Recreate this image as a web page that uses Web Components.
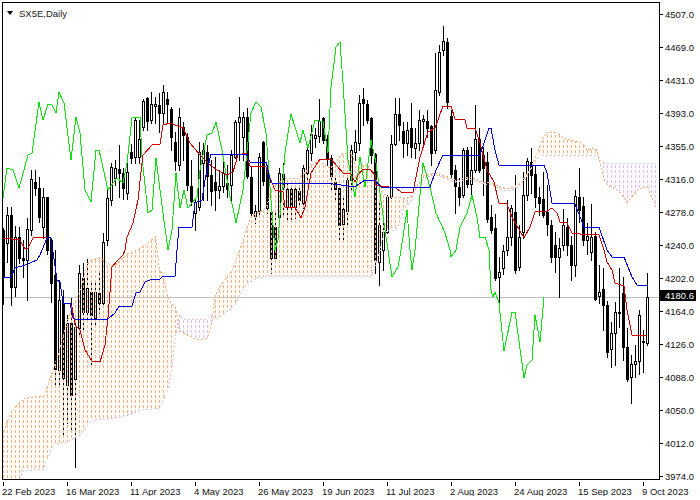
<!DOCTYPE html>
<html>
<head>
<meta charset="utf-8">
<title>SX5E,Daily</title>
<style>
    html, body { margin: 0; background: #fff; }
    body { padding: 2px; width: 696px; height: 496px; overflow: hidden; box-sizing: border-box; }
</style>
</head>
<body>
<chart-window symbol="SX5E,Daily" bid="4180.6" bid-y="297"></chart-window>

<script>
// chart data is in screen pixels, read off the picture: [high, bodyTop, bodyBottom, low, up]
const CANDLES = [
    [228,230,277,304,0],[207,215,243,262,1],[207,215,287,305,0],[226,237,287,296,1],[227,237,258,263,0],[240,258,260,277,0],
    [218,229,260,300,1],[170,179,230,235,1],[170,182,188,195,0],[177,188,217,222,0],[188,197,227,238,1],[197,197,250,254,0],
    [238,240,283,302,0],[250,275,369,387,0],[280,300,370,385,1],[290,303,378,435,0],[315,323,385,423,1],[298,323,395,432,0],
    [320,327,379,467,1],[265,273,328,335,1],[263,278,312,330,0],[259,288,312,322,1],[280,292,315,367,0],[280,292,318,325,1],
    [270,293,303,313,0],[233,242,303,304,1],[190,198,240,245,1],[163,167,200,205,1],[160,168,178,185,1],[145,169,173,197,0],
    [168,173,188,199,0],[162,172,193,199,1],[144,152,158,163,0],[118,120,157,163,1],[120,139,157,163,1],[99,101,127,130,1],
    [97,98,121,130,0],[92,104,120,123,1],[97,104,106,123,1],[93,105,113,132,0],[85,92,113,123,1],[92,99,104,123,0],
    [107,109,137,150,0],[132,142,161,170,0],[108,117,165,170,1],[122,127,135,160,0],[133,137,185,190,0],[160,186,201,205,0],
    [200,202,213,230,1],[142,152,207,210,1],[143,150,163,200,1],[145,152,176,200,0],[160,175,191,205,0],[157,182,190,210,0],
    [170,186,190,198,1],[160,173,186,192,1],[165,183,189,197,0],[150,155,185,200,1],[120,122,157,158,1],[97,117,122,160,1],
    [112,117,137,160,1],[108,117,176,178,0],[167,177,213,217,0],[205,211,216,223,1],[153,157,211,215,1],[141,142,181,185,0],
    [165,168,208,213,0],[200,212,258,273,0],[210,227,258,258,0],[168,173,217,225,1],[163,174,187,217,0],[180,189,207,220,1],
    [185,189,206,220,0],[185,189,207,218,1],[185,191,200,205,0],[165,168,203,208,1],[145,150,173,180,1],[125,134,153,160,1],
    [128,135,138,147,1],[99,121,136,142,1],[117,118,140,143,0],[135,139,158,165,0],[155,158,176,189,0],[178,182,189,200,0],
    [185,188,225,240,0],[197,209,224,240,1],[175,180,211,224,1],[145,150,180,190,1],[130,142,152,160,1],[95,103,143,150,1],
    [88,99,103,125,0],[100,104,120,123,0],[117,118,155,163,0],[153,154,260,273,0],[200,225,262,285,1],[220,232,250,270,1],
    [195,197,232,233,1],[135,144,197,198,1],[98,114,144,145,1],[98,114,125,140,0],[122,131,143,157,0],[122,130,143,155,1],
    [103,128,147,157,0],[128,143,148,158,1],[110,120,143,150,1],[115,119,121,145,1],[110,121,128,137,0],[125,126,153,165,0],
    [53,90,150,153,1],[45,52,92,95,1],[26,41,50,55,1],[38,42,102,108,0],[110,116,174,178,0],[165,170,186,213,0],
    [178,187,197,205,0],[148,150,195,197,1],[147,150,184,187,0],[147,170,184,195,1],[105,139,170,172,1],[128,139,170,172,0],
    [147,155,168,195,0],[152,162,219,222,0],[205,217,230,233,0],[214,228,278,280,0],[257,272,277,303,1],[245,251,268,274,1],
    [200,237,250,255,1],[205,208,237,245,1],[175,212,270,273,0],[225,237,267,270,1],[172,195,232,238,1],[158,161,195,200,1],
    [148,162,175,193,0],[165,174,197,207,0],[187,197,203,215,0],[172,199,215,217,0],[185,212,224,235,0],[220,225,257,262,0],
    [232,245,257,272,0],[238,248,257,297,1],[209,225,245,250,1],[218,227,245,255,0],[236,245,265,280,0],[190,196,265,276,1],
    [168,197,210,222,0],[197,206,240,245,0],[223,236,240,254,1],[204,237,252,260,1],[232,236,299,300,0],[265,292,296,303,1],
    [268,289,305,330,0],[301,305,352,357,0],[322,333,349,367,1],[302,312,333,365,1],[268,312,313,327,0],[277,293,347,360,0],
    [328,347,379,381,0],[355,364,377,403,1],[345,361,364,377,1],[310,315,361,374,1],[330,341,342,372,0],[273,297,343,345,1]
]

const TENKAN = [3,238,20,240,25,249,28,248,33,238,40,237,50,237,53,252,57,280,60,282,63,303,70,303,72,307,75,325,80,330,85,350,92,361,100,362,105,345,108,317,112,267,118,260,123,255,125,250,127,237,133,223,138,200,142,163,143,155,152,145,160,144,163,125,170,123,183,128,190,143,200,155,208,163,217,170,227,175,233,172,238,155,246,153,250,166,266,167,270,178,275,190,283,192,285,207,295,207,301,218,305,207,311,173,320,159,331,159,343,173,351,174,355,182,358,175,363,169,370,169,375,175,376,185,381,186,396,188,401,192,413,192,420,157,428,132,435,128,443,106,451,106,455,119,465,120,467,128,475,128,480,143,487,170,494,182,499,203,507,204,512,217,524,238,530,227,535,212,547,211,552,208,557,213,560,222,567,223,572,233,580,234,599,235,604,250,607,262,612,270,615,283,624,286,627,310,632,335,647,336]

const KIJUN = [3,277,11,277,15,268,25,265,37,260,40,255,47,238,50,237,53,252,57,280,60,282,63,303,70,303,73,318,77,320,108,319,115,313,119,306,132,306,136,293,140,292,145,282,152,279,160,279,163,276,175,276,177,250,179,227,192,227,195,203,202,200,205,180,208,167,211,154,246,154,250,162,266,162,271,183,333,184,348,186,356,186,365,180,375,180,381,187,430,187,436,170,443,155,480,155,485,140,489,128,491,128,495,150,499,165,544,165,547,173,552,203,575,204,584,227,599,227,607,250,612,257,624,257,632,277,637,285,647,285]

const CHIKOU = [3,198,7,168,13,170,19,188,28,155,32,153,39,102,43,120,48,104,52,105,56,113,59,92,64,103,71,160,76,117,80,133,85,190,91,202,96,150,99,150,108,190,117,178,123,183,127,163,132,118,140,117,142,157,148,213,152,210,156,158,163,213,168,250,172,230,176,173,180,208,184,190,188,208,197,197,200,170,207,135,212,133,216,122,222,150,230,197,233,208,236,223,243,190,251,113,256,102,261,107,266,133,271,200,275,250,278,240,285,153,291,114,300,143,303,130,308,148,315,120,323,122,328,153,331,87,336,47,340,42,343,83,348,160,355,197,360,157,365,187,371,140,376,163,380,193,385,230,388,250,392,277,398,267,401,250,407,210,410,250,412,270,415,250,423,163,430,187,436,213,445,233,450,250,451,257,456,250,460,227,467,213,472,195,477,217,480,238,485,237,489,250,491,290,493,297,495,292,499,303,504,351,512,312,515,312,524,378,527,365,532,360,535,315,540,342,544,297]

const CLOUD_TOP = [3,432,10,413,23,398,43,396,50,378,55,363,62,340,70,310,80,290,88,260,100,258,113,267,125,255,137,250,147,243,155,237,157,250,158,267,165,283,168,302,177,308,180,318,185,319,210,319,213,300,217,290,233,268,240,248,250,217,266,208,270,190,283,178,300,178,310,166,320,160,326,168,333,167,341,153,351,153,356,170,366,163,376,180,382,193,390,197,400,197,405,200,413,193,420,180,425,174,437,173,453,180,467,177,480,181,490,183,500,187,510,189,520,183,530,170,539,147,545,132,557,132,560,137,580,142,587,150,595,148,600,163,655,163]

const CLOUD_BOTTOM = [3,479,20,479,23,470,45,469,48,453,55,443,67,442,82,433,90,420,113,418,133,413,137,410,160,408,167,390,172,368,173,340,178,330,187,335,197,340,207,338,212,322,225,312,233,308,240,293,247,283,260,277,271,276,371,276,376,262,380,250,384,230,397,230,403,210,410,202,415,190,425,176,437,175,453,182,467,179,480,183,490,185,500,189,510,191,520,185,530,170,539,155,597,155,599,160,604,183,617,190,627,202,639,188,647,187,655,207]

function at(points, x) {
    for (let i = 2; i < points.length; i += 2) {
        if (x <= points[i]) {
            const x0 = points[i - 2], y0 = points[i - 1]
            return y0 + (points[i + 1] - y0) * (x - x0) / (points[i] - x0)
        }
    }
    return points[points.length - 1]
}

function toPoints(flat) {
    let out = []
    for (let i = 0; i < flat.length; i += 2) out.push(flat[i] + ',' + flat[i + 1])
    return out.join(' ')
}

// the thistle part of the cloud is where span B runs above span A
function isThistle(x) {
    return (x > 178 && x < 212) || x > 597
}

class ChartPlot extends HTMLElement {
    constructor() {
        super()
        this.attachShadow({ mode: 'open' })
    }

    connectedCallback() {
        this.render()
    }

    candles() {
        return CANDLES.map((c, i) => {
            const x = 3 + 4 * i + 0.5
            const [high, top, bottom, low, up] = c
            return `<path d="M${x} ${high}V${low + 1}"/><rect x="${x - 1}" y="${top + 0.5}" width="2" height="${Math.max(bottom - top, 1)}" fill="${up ? '#fff' : '#000'}"/>`
        }).join('')
    }

    cloud() {
        let hatch = ''
        let wash = ''
        let spanA = []
        let spanB = []
        for (let i = 0; i < 164; i++) {
            const x = 3 + 4 * i
            if (x > 655) break
            const top = Math.round(at(CLOUD_TOP, x))
            const bottom = Math.round(at(CLOUD_BOTTOM, x))
            const thistle = isThistle(x)
            spanA.push(x + 0.5, thistle ? bottom : top)
            spanB.push(x + 0.5, thistle ? top : bottom)
            if (bottom - top > 1) {
                const start = top - (top % 5)
                hatch += `<path d="M${x + 0.5} ${start}V${bottom}" stroke="${thistle ? '#dfc0ec' : '#f4b288'}" clip-path="inset(${top - start}px 0 0 0)"/>`
                wash += `<rect x="${x - 1}" y="${top}" width="4" height="${bottom - top}" fill="${thistle ? '#fdfafe' : '#fffbf7'}"/>`
            }
        }
        return {
            wash: wash,
            lines: `<g stroke-dasharray="3 2" fill="none" shape-rendering="crispEdges">${hatch}
            <polyline points="${toPoints(spanA)}" stroke="#f4b080" stroke-dasharray="2 2"/>
            <polyline points="${toPoints(spanB)}" stroke="#dcc8dc" stroke-dasharray="2 2"/></g>`
        }
    }

    render() {
        const cloud = this.cloud()
        this.shadowRoot.innerHTML = `
      <style>
        :host {
          display: block;
          position: relative;
          width: 656px;
          height: 476px;
          border: 1px solid #000;
          background: #fff;
        }

        svg {
          display: block;
        }

        .legend {
          position: absolute;
          left: 4px;
          top: 4px;
          display: flex;
          align-items: center;
          gap: 6px;
          height: 12px;
          color: #222;
          font-size: 9.5px;
        }

        .legend i {
          width: 0;
          height: 0;
          border-left: 3.5px solid transparent;
          border-right: 3.5px solid transparent;
          border-top: 4px solid #000;
        }
      </style>

      <svg width="656" height="476" viewBox="3 3 656 476">
        <g shape-rendering="crispEdges">${cloud.wash}</g>
        <path d="M3 297.5H659" stroke="#c0c0c0" shape-rendering="crispEdges"/>
        <g stroke="#000" shape-rendering="crispEdges">${this.candles()}</g>
        ${cloud.lines}
        <g fill="none" stroke-linejoin="round" shape-rendering="crispEdges">
          <polyline points="${toPoints(CHIKOU)}" stroke="#10e010"/>
          <polyline points="${toPoints(TENKAN)}" stroke="#d00000"/>
          <polyline points="${toPoints(KIJUN)}" stroke="#0000d8"/>
        </g>
      </svg>
      <div class="legend"><i></i><span>${this.getAttribute('symbol')}</span></div>
    `
    }
}

class PriceAxis extends HTMLElement {
    constructor() {
        super()
        this.attachShadow({ mode: 'open' })
    }

    connectedCallback() {
        const labels = ['4507.0', '4469.0', '4431.0', '4393.0', '4355.0', '4316.0', '4278.0', '4240.0',
            '4202.0', '4164.0', '4126.0', '4088.0', '4050.0', '4012.0', '3974.0']
        const bidTop = Number(this.getAttribute('bid-y')) - 7
        this.shadowRoot.innerHTML = `
      <style>
        :host {
          display: flex;
          flex-direction: column;
          gap: 22px;
          position: relative;
          padding-top: 7px;
          font-size: 9.5px;
        }

        .row {
          display: flex;
          align-items: center;
          gap: 2px;
          height: 11px;
        }

        .row::before {
          content: '';
          width: 3px;
          height: 1px;
          background: #000;
        }

        .bid {
          position: absolute;
          left: 0;
          top: ${bidTop}px;
          width: 32px;
          height: 11px;
          padding-left: 5px;
          line-height: 11px;
          background: #000;
          color: #fff;
        }
      </style>
      ${labels.map(label => `<div class="row"><span>${label}</span></div>`).join('')}
      <div class="bid">${this.getAttribute('bid')}</div>
    `
    }
}

class TimeAxis extends HTMLElement {
    constructor() {
        super()
        this.attachShadow({ mode: 'open' })
    }

    connectedCallback() {
        const labels = ['22 Feb 2023', '16 Mar 2023', '11 Apr 2023', '4 May 2023', '26 May 2023', '19 Jun 2023',
            '11 Jul 2023', '2 Aug 2023', '24 Aug 2023', '15 Sep 2023', '9 Oct 2023']
        this.shadowRoot.innerHTML = `
      <style>
        :host {
          display: flex;
          font-size: 9.5px;
        }

        .cell {
          flex: 0 0 64px;
          position: relative;
          padding-top: 3px;
          height: 13px;
          line-height: 13px;
          white-space: nowrap;
        }

        .cell::before {
          content: '';
          position: absolute;
          left: 1px;
          top: 0;
          width: 1px;
          height: 4px;
          background: #000;
        }
      </style>
      ${labels.map(label => `<div class="cell">${label}</div>`).join('')}
    `
    }
}

class ChartWindow extends HTMLElement {
    constructor() {
        super()
        this.attachShadow({ mode: 'open' })
    }

    connectedCallback() {
        const symbol = this.getAttribute('symbol')
        const bid = this.getAttribute('bid')
        const bidY = Number(this.getAttribute('bid-y'))
        this.shadowRoot.innerHTML = `
      <style>
        :host {
          display: grid;
          grid-template-columns: 658px 38px;
          font-family: "Liberation Sans", Arial, sans-serif;
          color: #111;
        }

        time-axis {
          grid-column: 1 / 3;
        }
      </style>
      <chart-plot symbol="${symbol}"></chart-plot>
      <price-axis bid="${bid}" bid-y="${bidY - 2}"></price-axis>
      <time-axis></time-axis>
    `
    }
}

customElements.define('chart-plot', ChartPlot)
customElements.define('price-axis', PriceAxis)
customElements.define('time-axis', TimeAxis)
customElements.define('chart-window', ChartWindow)
</script>
</body>
</html>
